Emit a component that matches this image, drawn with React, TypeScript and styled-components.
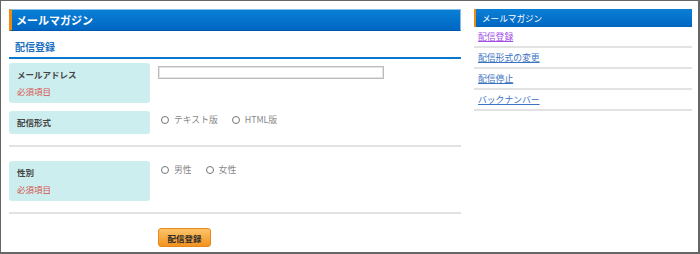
import styled, { createGlobalStyle } from "styled-components";

const GlobalStyle = createGlobalStyle`
  body {
    margin: 0;
    background: #fff;
    font-family: "Noto Sans CJK JP", "Noto Sans", sans-serif;
  }
`;

const Frame = styled.div`
  width: 700px;
  height: 254px;
  box-sizing: border-box;
  border: 1px solid #666;
  border-right-width: 2px;
  border-bottom-width: 2px;
  padding: 8px 6px 0 8px;
  display: flex;
  gap: 13px;
  background: #fff;
  overflow: hidden;
`;

const Main = styled.div`
  width: 452px;
  display: flex;
  flex-direction: column;
`;

const MainHeader = styled.div`
  height: 22px;
  box-sizing: border-box;
  background: linear-gradient(#0a7fd6, #0066c2);
  border: 1px solid #86bde9;
  border-left: 3px solid #f08a10;
  border-bottom-color: #0058b0;
  padding-left: 4px;
  color: #fff;
  font-size: 11px;
  font-weight: bold;
  line-height: 20px;
`;

const Heading = styled.h2`
  margin: 7px 0 0;
  padding: 0 6px 2px;
  font-size: 10px;
  line-height: 17px;
  font-weight: bold;
  color: #1c6fc0;
  border-bottom: 2px solid #0a78cf;
`;

const Form = styled.div`
  margin-top: 4px;
  display: flex;
  flex-direction: column;
`;

const Row = styled.div<{ $gap?: number }>`
  display: flex;
  gap: 8px;
  margin-top: ${(p) => p.$gap ?? 0}px;
`;

const Label = styled.div`
  width: 141px;
  flex: none;
  box-sizing: border-box;
  background: #cdeeee;
  border-radius: 3px;
  padding: 3px 8px;
  font-size: 8.5px;
  line-height: 17px;
  font-weight: bold;
  color: #444;
`;

const Required = styled.div`
  font-weight: normal;
  color: #d9534f;
`;

const Value = styled.div`
  display: flex;
  align-items: flex-start;
`;

const TextInput = styled.input`
  margin: 3px 0 0;
  width: 226px;
  height: 13px;
  box-sizing: border-box;
  border: 1px solid #bbb;
  box-shadow: inset 0 0 0 1px #e4e4e4;
  padding: 0;
`;

const Choices = styled.div`
  display: flex;
  gap: 14px;
  padding-left: 3px;
  font-size: 8.8px;
  line-height: 17px;
  color: #888;
`;

const Choice = styled.label`
  display: flex;
  align-items: center;
  gap: 5px;
`;

const Radio = styled.input.attrs({ type: "radio" })`
  appearance: none;
  margin: 0;
  width: 8px;
  height: 8px;
  border: 1px solid #777;
  border-radius: 50%;
  background: #fff;
`;

const Divider = styled.hr<{ $top: number }>`
  margin: ${(p) => p.$top}px 0 0;
  border: 0;
  border-top: 2px solid #e2e2e2;
  height: 0;
`;

const SubmitRow = styled.div`
  display: flex;
  margin-top: 14px;
  padding-left: 149px;
`;

const SubmitButton = styled.button`
  width: 53px;
  height: 19px;
  box-sizing: border-box;
  padding: 0;
  border: 1px solid #e58a18;
  border-radius: 3px;
  background: linear-gradient(#fdc46a, #f29220);
  color: #2a2a2a;
  font-family: inherit;
  font-size: 8.5px;
  font-weight: bold;
`;

const Side = styled.div`
  width: 218px;
  display: flex;
  flex-direction: column;
`;

const SideHeader = styled.div`
  height: 18px;
  box-sizing: border-box;
  background: linear-gradient(#0a7fd6, #0066c2);
  border-left: 2px solid #f08a10;
  padding-left: 6px;
  color: #fff;
  font-size: 8.6px;
  line-height: 18px;
`;

const SideItem = styled.div`
  height: 16px;
  padding: 3px 4px 0;
  font-size: 8.8px;
  line-height: 14px;
  border-bottom: 2px solid #e2e2e2;
`;

const SideLink = styled.a<{ $visited?: boolean }>`
  color: ${(p) => (p.$visited ? "#a24ee6" : "#3a72c4")};
  text-decoration: underline;
`;

const sideLinks = [
  { text: "配信登録", visited: true },
  { text: "配信形式の変更" },
  { text: "配信停止" },
  { text: "バックナンバー" },
];

export default function App() {
  return (
    <>
      <GlobalStyle />
      <Frame>
        <Main>
          <MainHeader>メールマガジン</MainHeader>
          <Heading>配信登録</Heading>
          <Form>
            <Row>
              <Label>
                メールアドレス
                <Required>必須項目</Required>
              </Label>
              <Value>
                <TextInput type="text" />
              </Value>
            </Row>
            <Row $gap={8}>
              <Label>配信形式</Label>
              <Value>
                <Choices>
                  <Choice>
                    <Radio name="format" />
                    テキスト版
                  </Choice>
                  <Choice>
                    <Radio name="format" />
                    HTML版
                  </Choice>
                </Choices>
              </Value>
            </Row>
            <Divider $top={11} />
            <Row $gap={14}>
              <Label>
                性別
                <Required>必須項目</Required>
              </Label>
              <Value>
                <Choices>
                  <Choice>
                    <Radio name="sex" />
                    男性
                  </Choice>
                  <Choice>
                    <Radio name="sex" />
                    女性
                  </Choice>
                </Choices>
              </Value>
            </Row>
            <Divider $top={11} />
            <SubmitRow>
              <SubmitButton>配信登録</SubmitButton>
            </SubmitRow>
          </Form>
        </Main>
        <Side>
          <SideHeader>メールマガジン</SideHeader>
          {sideLinks.map((l) => (
            <SideItem key={l.text}>
              <SideLink href="#" $visited={l.visited}>
                {l.text}
              </SideLink>
            </SideItem>
          ))}
        </Side>
      </Frame>
    </>
  );
}
